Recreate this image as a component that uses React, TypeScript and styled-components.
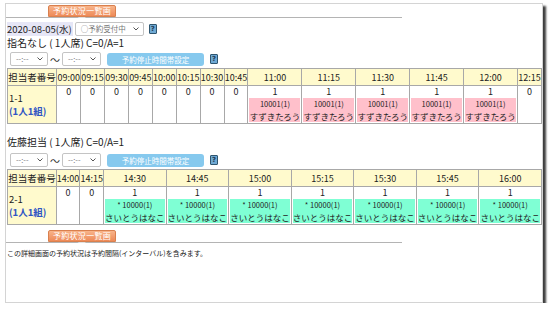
import { createGlobalStyle, styled } from "styled-components";

const GlobalStyle = createGlobalStyle`
  body {
    margin: 0;
    background: #fff;
    font-family: "Noto Sans CJK JP", "Noto Sans", sans-serif;
    color: #222;
  }
`;

const Window = styled.div`
  margin: 3px 0 0 5px;
  width: 538px;
  height: 300px;
  border: 1px solid #d4d4d4;
  box-shadow: 3px 3px 2px #3e3e3e;
  background: #fff;
  overflow: hidden;
  padding-left: 1px;
  box-sizing: border-box;
`;

const NavBar = styled.div`
  width: 354px;
  margin-left: -1px;
  padding-left: 42px;
  border-bottom: 1px solid #b4b4b4;
  display: flex;
  margin-top: ${p => (p.$top ? "1px" : "5px")};
`;

const NavButton = styled.button`
  width: 68px;
  height: 12px;
  padding: 0;
  border: 1px solid #d9804e;
  border-radius: 2px 2px 0 0;
  background: linear-gradient(#f8b48a, #ee8a58);
  color: #fff;
  font-family: inherit;
  font-size: 8px;
  line-height: 10px;
  letter-spacing: 0.3px;
`;

const Row = styled.div`
  display: flex;
  align-items: center;
  gap: ${p => p.$gap ?? 4}px;
  margin-top: ${p => p.$mt ?? 0}px;
  height: ${p => p.$h ?? 16}px;
`;

const DateLabel = styled.span`
  background: #e6e6f6;
  font-size: 9.5px;
  line-height: 14px;
  padding-right: 1px;
`;

const FakeSelect = styled.div`
  width: ${p => p.$w}px;
  height: 14px;
  box-sizing: border-box;
  border: 1px solid #c4c4c4;
  border-radius: 2px;
  background: #fff;
  display: flex;
  align-items: center;
  justify-content: space-between;
  padding: 0 4px 0 5px;
  font-size: 7.5px;
  line-height: 10px;
  color: #777;
  margin-left: ${p => p.$ml ?? 0}px;
`;

const HelpIcon = styled.span`
  width: 6px;
  height: 8px;
  border: 1px solid #2f5670;
  border-radius: 1px;
  background: #6fa9d3;
  color: #1c3a52;
  font-size: 7px;
  font-weight: bold;
  line-height: 8px;
  text-align: center;
  font-family: "DejaVu Sans", sans-serif;
  margin-left: ${p => p.$ml ?? 0}px;
`;

const Title = styled.div`
  font-size: 10px;
  line-height: 12px;
  margin-top: ${p => p.$mt}px;
  white-space: pre;
`;

const Wave = styled.span`
  font-size: 10px;
  color: #333;
  margin: 0 2px;
`;

const StopButton = styled.button`
  width: 97px;
  height: 13px;
  padding: 0;
  margin-left: 6px;
  border: none;
  border-radius: 3px;
  background: #86c9ee;
  color: #fff;
  font-family: inherit;
  font-size: 7.5px;
  line-height: 13px;
`;

const Table = styled.table`
  border-collapse: collapse;
  table-layout: fixed;
  margin-top: 2px;
  font-size: 9px;
`;

const HeadCell = styled.th`
  width: ${p => p.$w}px;
  height: 16px;
  padding: 0;
  border: 1px solid #a8a8a8;
  background: #fffacd;
  font-weight: normal;
  text-align: center;
  white-space: nowrap;
  overflow: hidden;
  line-height: 15px;
  font-size: ${p => (p.$label ? "9.5px" : "9px")};
`;

const NameCell = styled.td`
  height: ${p => p.$h}px;
  padding: 0 0 0 1px;
  border: 1px solid #a8a8a8;
  background: #fffacd;
  vertical-align: middle;
  font-size: 9.5px;
  line-height: 13px;
`;

const GroupNote = styled.span`
  display: block;
  color: #2f55c4;
  font-weight: bold;
`;

const SlotCell = styled.td`
  padding: 0 1px;
  border: 1px solid #a8a8a8;
  vertical-align: top;
  text-align: center;
  font-size: 9px;
  line-height: 11px;
  overflow: hidden;
`;

const Booking = styled.div`
  margin-top: 1px;
  background: ${p => p.$color};
  font-size: 8.5px;
  line-height: 12px;
  white-space: nowrap;
`;

const Code = styled.span`
  display: block;
  font-size: 7.5px;
`;

const Footer = styled.div`
  font-size: 7px;
  line-height: 10px;
  margin-top: 5px;
`;

const Chevron = () => (
  <svg width='6' height='4' viewBox='0 0 6 4'>
    <path d='M0.5 0.5 L3 3 L5.5 0.5' fill='none' stroke='#555' strokeWidth='1' />
  </svg>
);

type Slot = { t: string; n: number; w: number; code?: string; name?: string };

const narrow = (ts: string[]): Slot[] => ts.map(t => ({ t, n: 0, w: 24 }));

const schedule1: Slot[] = [
  ...narrow(["09:00", "09:15", "09:30", "09:45", "10:00", "10:15", "10:30", "10:45"]),
  ...["11:00", "11:15", "11:30", "11:45", "12:00"].map(t => ({
    t,
    n: 1,
    w: 54,
    code: "10001(1)",
    name: "すずきたろう",
  })),
  ...narrow(["12:15"]),
];

const schedule2: Slot[] = [
  ...narrow(["14:00", "14:15"]),
  ...["14:30", "14:45", "15:00", "15:15", "15:30", "15:45", "16:00"].map(t => ({
    t,
    n: 1,
    w: 62,
    code: "* 10000(1)",
    name: "さいとうはなこ",
  })),
];

function Controls({ mt }: { mt: number }) {
  return (
    <Row $mt={mt} $gap={0} $h={14}>
      <FakeSelect $w={38} $ml={3}>
        <span>--:--</span>
        <Chevron />
      </FakeSelect>
      <Wave>〜</Wave>
      <FakeSelect $w={39}>
        <span>--:--</span>
        <Chevron />
      </FakeSelect>
      <StopButton type='button'>予約停止時間帯設定</StopButton>
      <HelpIcon $ml={6}>?</HelpIcon>
    </Row>
  );
}

function Schedule({ slots, staff, color, rowH }: { slots: Slot[]; staff: string; color: string; rowH: number }) {
  return (
    <Table>
      <thead>
        <tr>
          <HeadCell $w={50} $label>
            担当者番号
          </HeadCell>
          {slots.map(s => (
            <HeadCell key={s.t} $w={s.w}>
              {s.t}
            </HeadCell>
          ))}
        </tr>
      </thead>
      <tbody>
        <tr>
          <NameCell $h={rowH}>
            {staff}
            <GroupNote>(1人1組)</GroupNote>
          </NameCell>
          {slots.map(s => (
            <SlotCell key={s.t}>
              {s.n}
              {s.code && (
                <Booking $color={color}>
                  <Code>{s.code}</Code>
                  {s.name}
                </Booking>
              )}
            </SlotCell>
          ))}
        </tr>
      </tbody>
    </Table>
  );
}

export default function App() {
  return (
    <>
      <GlobalStyle />
      <Window>
        <NavBar $top>
          <NavButton type='button'>予約状況一覧画面</NavButton>
        </NavBar>
        <Row $mt={3} $h={15} $gap={0}>
          <DateLabel>2020-08-05(水)</DateLabel>
          <FakeSelect $w={69} $ml={2}>
            <span>○予約受付中</span>
            <Chevron />
          </FakeSelect>
          <HelpIcon $ml={5}>?</HelpIcon>
        </Row>
        <Title $mt={1}>指名なし ( 1人席) C=0/A=1</Title>
        <Controls mt={3} />
        <Schedule slots={schedule1} staff='1-1' color='#ffc0cb' rowH={37} />
        <Title $mt={12}>佐藤担当 ( 1人席) C=0/A=1</Title>
        <Controls mt={5} />
        <Schedule slots={schedule2} staff='2-1' color='#7fffd4' rowH={37} />
        <NavBar>
          <NavButton type='button'>予約状況一覧画面</NavButton>
        </NavBar>
        <Footer>この詳細画面の予約状況は予約間隔(インターバル)を含みます。</Footer>
      </Window>
    </>
  );
}
